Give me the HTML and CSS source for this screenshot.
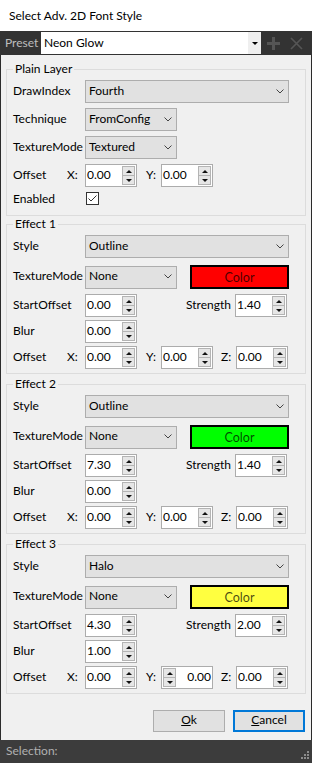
FILE: index.html
```html
<!DOCTYPE html>
<html>
<head>
<meta charset="utf-8">
<title>Select Adv. 2D Font Style</title>
<link rel="stylesheet" href="styles.css">
</head>
<body>
<div class="window">
  <div class="titlebar">Select Adv. 2D Font Style</div>

  <div class="presetbar">
    <span class="preset-label">Preset</span>
    <div class="preset-combo">
      <span class="preset-value">Neon Glow</span>
      <span class="preset-drop"><i class="tri-down"></i></span>
    </div>
    <svg class="tool-icon plus" width="13" height="13" viewBox="0 0 13 13"><rect x="5" y="0" width="3" height="13" fill="#555"/><rect x="0" y="5" width="13" height="3" fill="#555"/></svg>
    <svg class="tool-icon close" width="13" height="13" viewBox="0 0 13 13"><path d="M1 1 L12 12 M12 1 L1 12" stroke="#555" stroke-width="1.7" fill="none"/></svg>
  </div>

  <div class="content">
    <section class="group plain">
      <div class="group-title">Plain Layer</div>
      <div class="plain-rows">
        <div class="row">
          <span class="lbl">DrawIndex</span>
          <div class="combo wide"><span class="combo-text">Fourth</span><svg class="chev" width="8" height="5" viewBox="0 0 8 5"><polyline points="0.5,0.5 4,4 7.5,0.5" fill="none" stroke="#444" stroke-width="1"/></svg></div>
        </div>
        <div class="row">
          <span class="lbl">Technique</span>
          <div class="combo small"><span class="combo-text">FromConfig</span><svg class="chev" width="8" height="5" viewBox="0 0 8 5"><polyline points="0.5,0.5 4,4 7.5,0.5" fill="none" stroke="#444" stroke-width="1"/></svg></div>
        </div>
        <div class="row">
          <span class="lbl">TextureMode</span>
          <div class="combo small"><span class="combo-text">Textured</span><svg class="chev" width="8" height="5" viewBox="0 0 8 5"><polyline points="0.5,0.5 4,4 7.5,0.5" fill="none" stroke="#444" stroke-width="1"/></svg></div>
        </div>
        <div class="row">
          <span class="lbl lbl-offset">Offset</span>
          <span class="axis axis-x">X:</span>
          <div class="spin"><span class="spin-val">0.00</span><span class="spin-btns"><span class="sb"><i class="tri-up"></i></span><span class="sb"><i class="tri-dn"></i></span></span></div>
          <span class="axis axis-y">Y:</span>
          <div class="spin"><span class="spin-val">0.00</span><span class="spin-btns"><span class="sb"><i class="tri-up"></i></span><span class="sb"><i class="tri-dn"></i></span></span></div>
        </div>
        <div class="row row-check">
          <span class="lbl">Enabled</span>
          <span class="check"><svg width="11" height="11" viewBox="0 0 11 11"><polyline points="1.5,5.5 4,8 9.5,2.5" fill="none" stroke="#333" stroke-width="1"/></svg></span>
        </div>
      </div>
    </section>

    <section class="group effect">
      <div class="group-title">Effect 1</div>
      <div class="effect-rows">
        <div class="row">
          <span class="lbl">Style</span>
          <div class="combo wide"><span class="combo-text">Outline</span><svg class="chev" width="8" height="5" viewBox="0 0 8 5"><polyline points="0.5,0.5 4,4 7.5,0.5" fill="none" stroke="#444" stroke-width="1"/></svg></div>
        </div>
        <div class="row row-tex">
          <span class="lbl">TextureMode</span>
          <div class="combo small"><span class="combo-text">None</span><svg class="chev" width="8" height="5" viewBox="0 0 8 5"><polyline points="0.5,0.5 4,4 7.5,0.5" fill="none" stroke="#444" stroke-width="1"/></svg></div>
          <div class="color-btn red">Color</div>
        </div>
        <div class="row row-start">
          <span class="lbl">StartOffset</span>
          <div class="spin"><span class="spin-val">0.00</span><span class="spin-btns"><span class="sb"><i class="tri-up"></i></span><span class="sb"><i class="tri-dn"></i></span></span></div>
          <span class="lbl-strength">Strength</span>
          <div class="spin"><span class="spin-val">1.40</span><span class="spin-btns"><span class="sb"><i class="tri-up"></i></span><span class="sb"><i class="tri-dn"></i></span></span></div>
        </div>
        <div class="row row-blur">
          <span class="lbl">Blur</span>
          <div class="spin"><span class="spin-val">0.00</span><span class="spin-btns"><span class="sb"><i class="tri-up"></i></span><span class="sb"><i class="tri-dn"></i></span></span></div>
        </div>
        <div class="row row-off">
          <span class="lbl lbl-offset">Offset</span>
          <span class="axis axis-x">X:</span>
          <div class="spin"><span class="spin-val">0.00</span><span class="spin-btns"><span class="sb"><i class="tri-up"></i></span><span class="sb"><i class="tri-dn"></i></span></span></div>
          <span class="axis axis-y">Y:</span>
          <div class="spin"><span class="spin-val">0.00</span><span class="spin-btns"><span class="sb"><i class="tri-up"></i></span><span class="sb"><i class="tri-dn"></i></span></span></div>
          <span class="axis axis-z">Z:</span>
          <div class="spin"><span class="spin-val">0.00</span><span class="spin-btns"><span class="sb"><i class="tri-up"></i></span><span class="sb"><i class="tri-dn"></i></span></span></div>
        </div>
      </div>
    </section>

    <section class="group effect">
      <div class="group-title">Effect 2</div>
      <div class="effect-rows">
        <div class="row">
          <span class="lbl">Style</span>
          <div class="combo wide"><span class="combo-text">Outline</span><svg class="chev" width="8" height="5" viewBox="0 0 8 5"><polyline points="0.5,0.5 4,4 7.5,0.5" fill="none" stroke="#444" stroke-width="1"/></svg></div>
        </div>
        <div class="row row-tex">
          <span class="lbl">TextureMode</span>
          <div class="combo small"><span class="combo-text">None</span><svg class="chev" width="8" height="5" viewBox="0 0 8 5"><polyline points="0.5,0.5 4,4 7.5,0.5" fill="none" stroke="#444" stroke-width="1"/></svg></div>
          <div class="color-btn green">Color</div>
        </div>
        <div class="row row-start">
          <span class="lbl">StartOffset</span>
          <div class="spin"><span class="spin-val">7.30</span><span class="spin-btns"><span class="sb"><i class="tri-up"></i></span><span class="sb"><i class="tri-dn"></i></span></span></div>
          <span class="lbl-strength">Strength</span>
          <div class="spin"><span class="spin-val">1.40</span><span class="spin-btns"><span class="sb"><i class="tri-up"></i></span><span class="sb"><i class="tri-dn"></i></span></span></div>
        </div>
        <div class="row row-blur">
          <span class="lbl">Blur</span>
          <div class="spin"><span class="spin-val">0.00</span><span class="spin-btns"><span class="sb"><i class="tri-up"></i></span><span class="sb"><i class="tri-dn"></i></span></span></div>
        </div>
        <div class="row row-off">
          <span class="lbl lbl-offset">Offset</span>
          <span class="axis axis-x">X:</span>
          <div class="spin"><span class="spin-val">0.00</span><span class="spin-btns"><span class="sb"><i class="tri-up"></i></span><span class="sb"><i class="tri-dn"></i></span></span></div>
          <span class="axis axis-y">Y:</span>
          <div class="spin"><span class="spin-val">0.00</span><span class="spin-btns"><span class="sb"><i class="tri-up"></i></span><span class="sb"><i class="tri-dn"></i></span></span></div>
          <span class="axis axis-z">Z:</span>
          <div class="spin"><span class="spin-val">0.00</span><span class="spin-btns"><span class="sb"><i class="tri-up"></i></span><span class="sb"><i class="tri-dn"></i></span></span></div>
        </div>
      </div>
    </section>

    <section class="group effect">
      <div class="group-title">Effect 3</div>
      <div class="effect-rows">
        <div class="row">
          <span class="lbl">Style</span>
          <div class="combo wide"><span class="combo-text">Halo</span><svg class="chev" width="8" height="5" viewBox="0 0 8 5"><polyline points="0.5,0.5 4,4 7.5,0.5" fill="none" stroke="#444" stroke-width="1"/></svg></div>
        </div>
        <div class="row row-tex">
          <span class="lbl">TextureMode</span>
          <div class="combo small"><span class="combo-text">None</span><svg class="chev" width="8" height="5" viewBox="0 0 8 5"><polyline points="0.5,0.5 4,4 7.5,0.5" fill="none" stroke="#444" stroke-width="1"/></svg></div>
          <div class="color-btn yellow">Color</div>
        </div>
        <div class="row row-start">
          <span class="lbl">StartOffset</span>
          <div class="spin"><span class="spin-val">4.30</span><span class="spin-btns"><span class="sb"><i class="tri-up"></i></span><span class="sb"><i class="tri-dn"></i></span></span></div>
          <span class="lbl-strength">Strength</span>
          <div class="spin"><span class="spin-val">2.00</span><span class="spin-btns"><span class="sb"><i class="tri-up"></i></span><span class="sb"><i class="tri-dn"></i></span></span></div>
        </div>
        <div class="row row-blur">
          <span class="lbl">Blur</span>
          <div class="spin"><span class="spin-val">1.00</span><span class="spin-btns"><span class="sb"><i class="tri-up"></i></span><span class="sb"><i class="tri-dn"></i></span></span></div>
        </div>
        <div class="row row-off">
          <span class="lbl lbl-offset">Offset</span>
          <span class="axis axis-x">X:</span>
          <div class="spin"><span class="spin-val">0.00</span><span class="spin-btns"><span class="sb"><i class="tri-up"></i></span><span class="sb"><i class="tri-dn"></i></span></span></div>
          <span class="axis axis-y">Y:</span>
          <div class="spin spin-rev"><span class="spin-val">0.00</span><span class="spin-btns"><span class="sb"><i class="tri-up"></i></span><span class="sb"><i class="tri-dn"></i></span></span></div>
          <span class="axis axis-z">Z:</span>
          <div class="spin"><span class="spin-val">0.00</span><span class="spin-btns"><span class="sb"><i class="tri-up"></i></span><span class="sb"><i class="tri-dn"></i></span></span></div>
        </div>
      </div>
    </section>

    <div class="actions">
      <div class="btn"><u>O</u>k</div>
      <div class="btn btn-default"><u>C</u>ancel</div>
    </div>
  </div>

  <div class="statusbar">
    <span class="status-text">Selection:</span>
    <svg class="grip" width="8" height="8" viewBox="0 0 8 8"><g fill="#8c8c8c"><rect x="6" y="0" width="2" height="2"/><rect x="3" y="3" width="2" height="2"/><rect x="6" y="3" width="2" height="2"/><rect x="0" y="6" width="2" height="2"/><rect x="3" y="6" width="2" height="2"/><rect x="6" y="6" width="2" height="2"/></g></svg>
  </div>
</div>
</body>
</html>
```

FILE: styles.css
```css
* { box-sizing: border-box; }
html, body { margin: 0; padding: 0; }
body {
  width: 312px;
  height: 763px;
  overflow: hidden;
  background: #f0f0f0;
  color: #000;
  font-family: Lato, "Noto Sans", "Liberation Sans", sans-serif;
  font-size: 12px;
}
.window { display: flex; flex-direction: column; height: 763px; }

.titlebar {
  flex: none;
  height: 31px;
  line-height: 31px;
  padding-left: 9px;
  background: #fff;
}

.presetbar {
  flex: none;
  height: 24px;
  background: #333;
  display: flex;
  align-items: center;
  padding-left: 5px;
}
.preset-label { width: 36px; color: #bdbdbd; line-height: 14px; padding-bottom: 1px; }
.preset-combo { width: 220px; height: 22px; background: #fff; display: flex; }
.preset-value { flex: 1; padding-left: 3px; line-height: 21px; }
.preset-drop { width: 13px; background: #efefef; display: flex; align-items: center; justify-content: center; }
.tri-down {
  display: block; width: 0; height: 0;
  border-left: 3px solid transparent; border-right: 3px solid transparent;
  border-top: 3px solid #000;
}
.tool-icon { display: block; flex: none; }
.tool-icon.plus { margin-left: 6px; }
.tool-icon.close { margin-left: 10px; }

.content {
  flex: 1;
  border-left: 1px solid #2b2b2b;
  border-right: 1px solid #2b2b2b;
  padding: 14px 5px 0;
  display: flex;
  flex-direction: column;
}

.group {
  border: 1px solid #dcdcdc;
  padding-left: 6px;
  display: flex;
  flex-direction: column;
}
.effect { margin-top: 10px; }
.plain + .effect { margin-top: 8px; }
.group-title {
  align-self: flex-start;
  margin-top: -8px;
  padding: 0 2px;
  background: #f0f0f0;
  line-height: 14px;
}

.plain-rows {
  margin-top: 4px;
  padding-bottom: 10px;
  display: flex;
  flex-direction: column;
  gap: 5px;
}
.effect-rows {
  margin-top: 4px;
  padding-bottom: 4px;
  display: flex;
  flex-direction: column;
}
.row { display: flex; align-items: center; height: 23px; }
.row-check { height: 13px; }
.row-tex { height: 24px; margin-top: 7px; }
.row-start { margin-top: 5px; }
.row-blur { margin-top: 3px; }
.row-off { margin-top: 3px; }

.lbl { flex: none; width: 72px; line-height: 14px; padding-bottom: 2px; white-space: nowrap; }
.row-check .lbl { padding-bottom: 0; }
.lbl-offset { width: 54px; }
.axis { flex: none; width: 15px; line-height: 14px; padding-bottom: 2px; }
.axis-x { width: 18px; }
.axis-y { margin-left: 9px; }
.axis-z { margin-left: 8px; }
.lbl-strength { flex: none; width: 94px; margin-right: 4px; text-align: right; line-height: 14px; padding-bottom: 2px; }

.combo {
  flex: none;
  height: 23px;
  background: #e1e1e1;
  border: 1px solid #adadad;
  display: flex;
  align-items: center;
  padding: 0 4px 2px 3px;
}
.combo.wide { width: 204px; }
.combo.small { width: 92px; }
.combo-text { flex: 1; line-height: 14px; }
.chev { display: block; flex: none; margin-top: 1px; }

.spin {
  flex: none;
  width: 52px;
  height: 23px;
  background: #fff;
  border: 1px solid #acacac;
  display: flex;
}
.spin-val { flex: 1; padding: 0 0 2px 1px; line-height: 19px; }
.spin-btns {
  flex: none;
  width: 13px;
  margin: 1px 1px 1px 0;
  display: flex;
  flex-direction: column;
  border: 1px solid #b4b4b4;
  background: #e6e6e6;
}
.sb { flex: 1; display: flex; align-items: center; justify-content: center; }
.sb + .sb { border-top: 1px solid #b4b4b4; }
.tri-up {
  display: block; width: 0; height: 0;
  border-left: 3px solid transparent; border-right: 3px solid transparent;
  border-bottom: 3px solid #111;
}
.tri-dn {
  display: block; width: 0; height: 0;
  border-left: 3px solid transparent; border-right: 3px solid transparent;
  border-top: 3px solid #111;
}
.spin-rev { flex-direction: row-reverse; }
.spin-rev .spin-val { text-align: right; padding: 0 1px 2px 0; }
.spin-rev .spin-btns { margin: 1px 0 1px 1px; }

.color-btn {
  flex: none;
  width: 99px;
  height: 24px;
  margin-left: 13px;
  border: 2px solid #000;
  text-align: center;
  padding-top: 2px;
  line-height: 18px;
  color: rgba(0, 0, 0, 0.72);
  font-size: 12.5px;
}
.color-btn.red { background: #ff0000; }
.color-btn.green { background: #00ff00; }
.color-btn.yellow { background: #ffff40; }

.check {
  flex: none;
  width: 13px;
  height: 13px;
  margin-left: 1px;
  border: 1px solid #333;
  background: #fff;
  display: block;
}
.check svg { display: block; }

.actions {
  margin-top: 16px;
  padding-right: 1px;
  display: flex;
  justify-content: flex-end;
  gap: 8px;
}
.btn {
  width: 72px;
  height: 22px;
  background: #e1e1e1;
  border: 1px solid #adadad;
  text-align: center;
  line-height: 18px;
}
.btn-default { border: 2px solid #0078d7; line-height: 16px; }

.statusbar {
  flex: none;
  height: 23px;
  background: #3c3c3c;
  color: #b0b0b0;
  display: flex;
  align-items: center;
  padding-left: 6px;
}
.status-text { line-height: 14px; padding-bottom: 1px; }
.grip { display: block; margin-left: auto; align-self: flex-end; margin-right: 3px; margin-bottom: 4px; }
```
